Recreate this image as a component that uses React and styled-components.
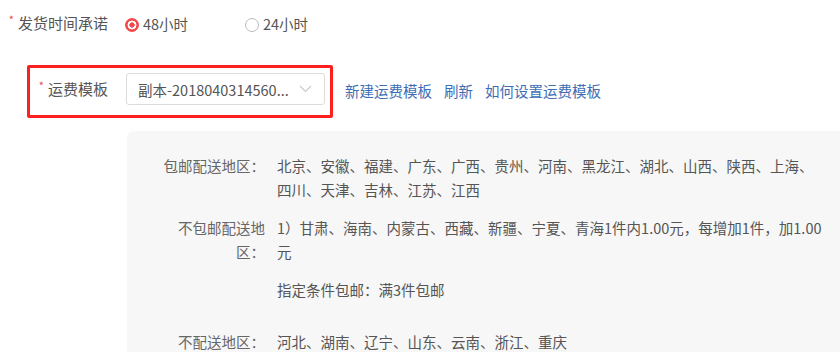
import React from 'react';
import styled, { createGlobalStyle } from 'styled-components';

const GlobalStyle = createGlobalStyle`
  html, body {
    margin: 0;
    padding: 0;
    background: #fff;
    overflow: hidden;
  }
  body {
    font-family: "Noto Sans CJK SC", "Noto Sans", sans-serif;
    color: #555;
  }
`;

const Page = styled.div`
  width: 840px;
  height: 364px;
  padding-top: 10px;
  box-sizing: border-box;
  overflow: hidden;
`;

const FormRow = styled.div`
  display: flex;
  align-items: center;
  height: 26px;
`;

const Label = styled.div`
  width: ${(p) => p.width}px;
  flex: 0 0 auto;
  text-align: right;
  font-size: 15px;
  line-height: 26px;
  color: #555;
  white-space: nowrap;
`;

const Star = styled.span`
  color: #f5484b;
  font-size: 11px;
  vertical-align: top;
  line-height: 18px;
  margin-right: 4px;
`;

const RadioGroup = styled.div`
  display: flex;
  align-items: center;
  margin-left: 17px;
`;

const RadioOption = styled.label`
  display: flex;
  align-items: center;
  width: 120px;
  font-size: 14.5px;
  color: #555;
`;

const RadioDot = styled.span`
  width: 14px;
  height: 14px;
  border-radius: 50%;
  box-sizing: border-box;
  margin-right: 4px;
  margin-top: 3px;
  border: 1px solid ${(p) => (p.checked ? '#f5484b' : '#bbb')};
  background: ${(p) =>
    p.checked
      ? 'radial-gradient(circle, #f5484b 0 2.4px, #fff 2.9px 4.2px, #f5484b 4.7px)'
      : '#fff'};
`;

const TemplateRow = styled.div`
  display: flex;
  align-items: center;
  margin-top: 29px;
`;

const Highlight = styled.div`
  display: flex;
  align-items: center;
  margin-left: 27px;
  border: 3px solid #ff1f1f;
  border-radius: 2px;
  padding: 5px 5px 10px 0;
`;

const Select = styled.div`
  display: flex;
  align-items: center;
  justify-content: space-between;
  width: 199px;
  height: 32px;
  box-sizing: border-box;
  margin-left: 18px;
  padding: 0 12px 0 11px;
  border: 1px solid #dcdcdc;
  border-radius: 3px;
  background: #fff;
  font-size: 14.5px;
  color: #555;
  white-space: nowrap;
`;

const Links = styled.div`
  display: flex;
  gap: 12px;
  margin-left: 12px;
  margin-top: -2px;
`;

const Link = styled.a`
  font-size: 14.5px;
  color: #3e6db5;
  text-decoration: none;
  cursor: pointer;
`;

const Panel = styled.div`
  margin: 13px 0 0 127px;
  width: 760px;
  height: 221px;
  box-sizing: border-box;
  padding: 23px 0 0 28px;
  background: #f7f7f7;
  border-radius: 7px 7px 0 0;
  overflow: hidden;
`;

const InfoRow = styled.div`
  display: flex;
  gap: 12px;
  margin-bottom: ${(p) => p.gap}px;
  font-size: 14.5px;
  line-height: 24px;
`;

const InfoLabel = styled.div`
  flex: 0 0 110px;
  text-align: right;
  color: #666;
`;

const InfoValue = styled.div`
  flex: 0 0 548px;
  color: #555;
`;

const Note = styled.div`
  margin-top: 14px;
`;

const Chevron = () => (
  <svg width="13" height="8" viewBox="0 0 13 8" fill="none">
    <polyline points="1,1 6.5,6.5 12,1" stroke="#c4c8cf" strokeWidth="1.1" />
  </svg>
);

const App = () => {
  return (
    <>
      <GlobalStyle />
      <Page>
        <FormRow>
          <Label width={108}>
            <Star>*</Star>发货时间承诺
          </Label>
          <RadioGroup>
            <RadioOption>
              <RadioDot checked />
              48小时
            </RadioOption>
            <RadioOption>
              <RadioDot />
              24小时
            </RadioOption>
          </RadioGroup>
        </FormRow>

        <TemplateRow>
          <Highlight>
            <Label width={78}>
              <Star>*</Star>运费模板
            </Label>
            <Select>
              <span>副本-2018040314560...</span>
              <Chevron />
            </Select>
          </Highlight>
          <Links>
            <Link>新建运费模板</Link>
            <Link>刷新</Link>
            <Link>如何设置运费模板</Link>
          </Links>
        </TemplateRow>

        <Panel>
          <InfoRow gap={14}>
            <InfoLabel>包邮配送地区：</InfoLabel>
            <InfoValue>
              北京、安徽、福建、广东、广西、贵州、河南、黑龙江、湖北、山西、陕西、上海、四川、天津、吉林、江苏、江西
            </InfoValue>
          </InfoRow>
          <InfoRow gap={28}>
            <InfoLabel>不包邮配送地区：</InfoLabel>
            <InfoValue>
              <div>1）甘肃、海南、内蒙古、西藏、新疆、宁夏、青海1件内1.00元，每增加1件，加1.00元</div>
              <Note>指定条件包邮：满3件包邮</Note>
            </InfoValue>
          </InfoRow>
          <InfoRow gap={0}>
            <InfoLabel>不配送地区：</InfoLabel>
            <InfoValue>河北、湖南、辽宁、山东、云南、浙江、重庆</InfoValue>
          </InfoRow>
        </Panel>
      </Page>
    </>
  );
};

export default App;
